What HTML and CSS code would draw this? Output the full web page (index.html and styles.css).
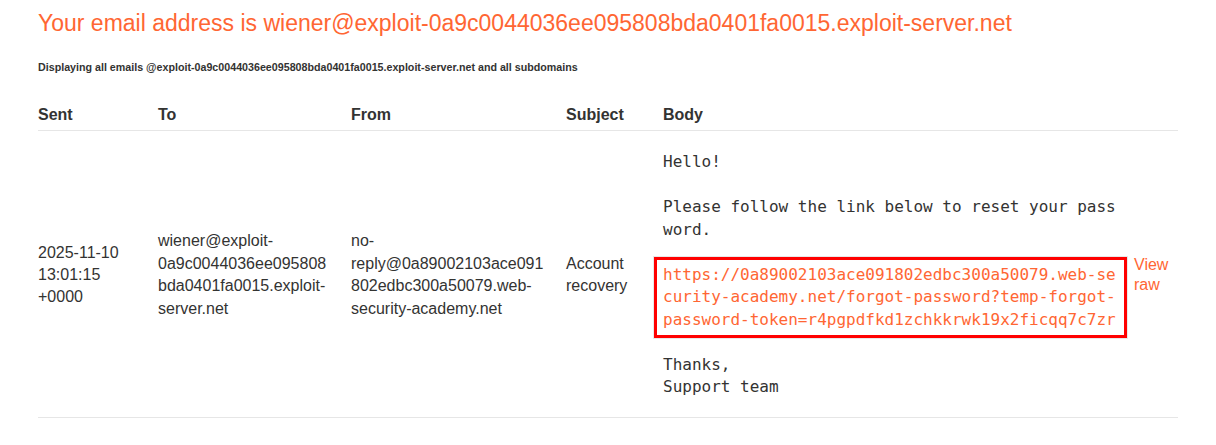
FILE: index.html
```html
<!DOCTYPE html>
<html>
<head>
<meta charset="utf-8">
<link rel="stylesheet" href="styles.css">
</head>
<body>
<div class="page">
  <h1 class="title">Your email address is wiener@exploit-0a9c0044036ee095808bda0401fa0015.exploit-server.net</h1>
  <h4 class="subtitle">Displaying all emails @exploit-0a9c0044036ee095808bda0401fa0015.exploit-server.net and all subdomains</h4>
  <div class="emails">
    <div class="head">Sent</div>
    <div class="head">To</div>
    <div class="head">From</div>
    <div class="head">Subject</div>
    <div class="head">Body</div>
    <div class="head"></div>

    <div class="cell">2025-11-10 13:01:15 +0000</div>
    <div class="cell cell-to">wiener@exploit-0a9c0044036ee095808bda0401fa0015.exploit-server.net</div>
    <div class="cell">no-reply@0a89002103ace091802edbc300a50079.web-security-academy.net</div>
    <div class="cell">Account recovery</div>
    <div class="cell body-cell">
      <div class="mail">
        <p class="mono gap">Hello!</p>
        <p class="mono gap">Please follow the link below to reset your password.</p>
        <a class="mono reset-link gap" href="#">https://0a89002103ace091802edbc300a50079.web-security-academy.net/forgot-password?temp-forgot-password-token=r4pgpdfkd1zchkkrwk19x2ficqq7c7zr</a>
        <p class="mono">Thanks,<br>Support team</p>
      </div>
    </div>
    <div class="cell raw-cell"><a class="raw" href="#">View raw</a></div>
  </div>
</div>
</body>
</html>
```
FILE: styles.css
```css
html, body {
  margin: 0;
  padding: 0;
  background: #ffffff;
}

body {
  font-family: "Liberation Sans", Arial, sans-serif;
  color: #333332;
}

.page {
  padding: 8px 38px 0 38px;
  width: 1140px;
}

.title {
  margin: 0;
  font-size: 23px;
  font-weight: normal;
  line-height: 30px;
  color: #ff6633;
}

.subtitle {
  margin: 22px 0 0 0;
  font-size: 10.7px;
  line-height: 14px;
  font-weight: bold;
  color: #333332;
}

.emails {
  margin-top: 16px;
  display: grid;
  grid-template-columns: 120px 193px 215px 97px 471px 44px;
  font-size: 16px;
  line-height: 22.4px;
}

.head {
  font-weight: bold;
  padding: 14px 16px 4px 0;
  border-bottom: 1px solid #e6e6e6;
}

.cell {
  padding: 20px 16px 18px 0;
  border-bottom: 1px solid #e6e6e6;
  align-self: stretch;
  display: flex;
  flex-direction: column;
  justify-content: center;
  overflow-wrap: anywhere;
}

.cell-to {
  padding-right: 18px;
}

.mono {
  font-family: "DejaVu Sans Mono", monospace;
  font-size: 16px;
  line-height: 22.5px;
  margin: 0;
  word-break: break-all;
}

.gap {
  margin-bottom: 22.5px;
}

.reset-link {
  display: block;
  color: #ff6633;
  text-decoration: none;
  margin: -7px -9px 15.5px -9px;
  padding: 4px 6px;
  border: 3px solid #ff0000;
  box-shadow: 0 0 0 1px #e8e8e8;
}

.raw-cell {
  padding-right: 0;
}

.raw {
  color: #ff6633;
  text-decoration: none;
  line-height: 20px;
}
```
